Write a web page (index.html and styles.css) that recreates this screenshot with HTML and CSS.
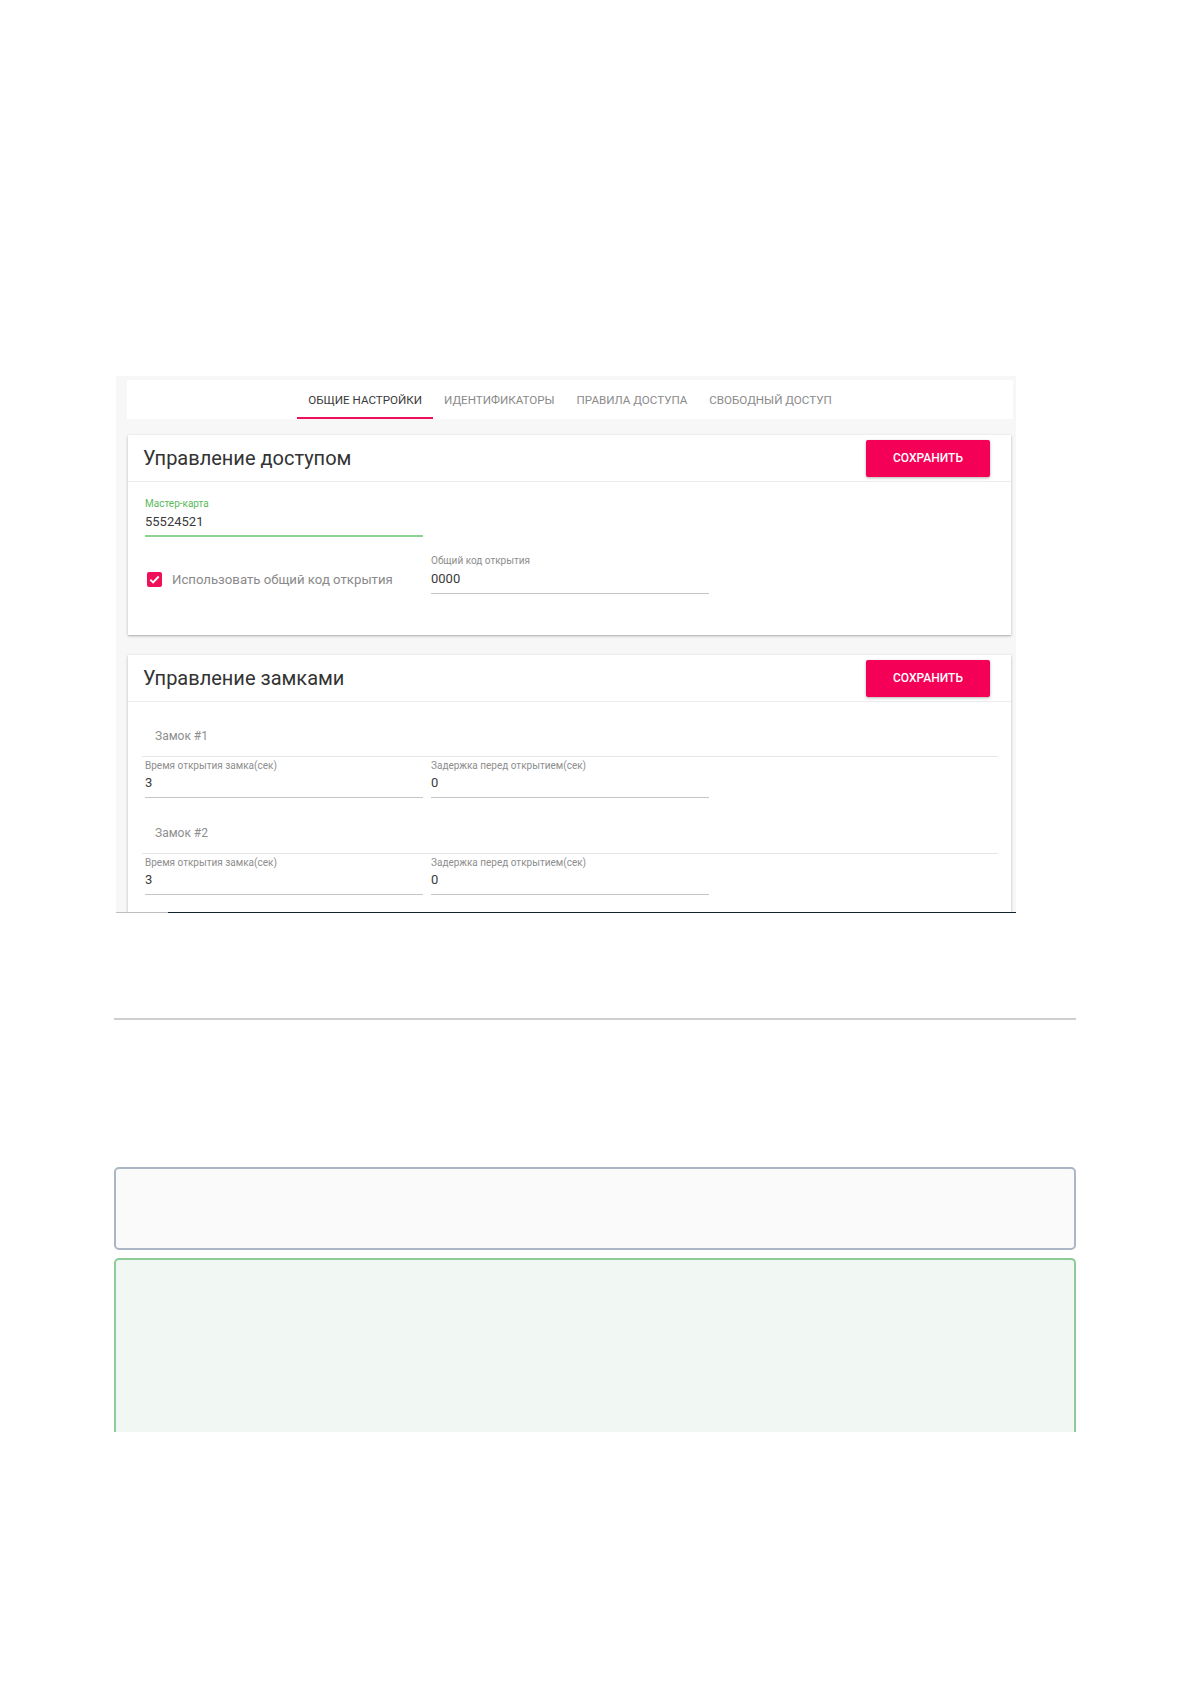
FILE: index.html
```html
<!DOCTYPE html>
<html lang="ru">
<head>
<meta charset="utf-8">
<title>Управление доступом</title>
<link rel="stylesheet" href="styles.css">
</head>
<body>
<div class="page">
  <div class="shot">
    <div class="shot-inner">
      <nav class="tabs">
        <span class="tab active">ОБЩИЕ НАСТРОЙКИ</span>
        <span class="tab">ИДЕНТИФИКАТОРЫ</span>
        <span class="tab">ПРАВИЛА ДОСТУПА</span>
        <span class="tab">СВОБОДНЫЙ ДОСТУП</span>
      </nav>

      <section class="card card-access">
        <header class="card-head">
          <h2 class="card-title">Управление доступом</h2>
          <button class="btn-save">СОХРАНИТЬ</button>
        </header>
        <div class="card-body">
          <div class="field field-focus">
            <div class="field-label">Мастер-карта</div>
            <div class="field-value">55524521</div>
          </div>
          <div class="row row-check">
            <label class="check">
              <span class="check-box"><svg viewBox="0 0 16 16" width="15" height="15"><path d="M3.5 8.2l3 3 6-6.4" fill="none" stroke="#fff" stroke-width="2"/></svg></span>
              <span class="check-text">Использовать общий код открытия</span>
            </label>
            <div class="field">
              <div class="field-label">Общий код открытия</div>
              <div class="field-value">0000</div>
            </div>
          </div>
        </div>
      </section>

      <section class="card card-locks">
        <header class="card-head">
          <h2 class="card-title">Управление замками</h2>
          <button class="btn-save">СОХРАНИТЬ</button>
        </header>
        <div class="card-body locks-body">
          <div class="lock">
            <div class="lock-title">Замок #1</div>
            <div class="row row-fields">
              <div class="field">
                <div class="field-label">Время открытия замка(сек)</div>
                <div class="field-value">3</div>
              </div>
              <div class="field">
                <div class="field-label">Задержка перед открытием(сек)</div>
                <div class="field-value">0</div>
              </div>
            </div>
          </div>
          <div class="lock">
            <div class="lock-title">Замок #2</div>
            <div class="row row-fields">
              <div class="field">
                <div class="field-label">Время открытия замка(сек)</div>
                <div class="field-value">3</div>
              </div>
              <div class="field">
                <div class="field-label">Задержка перед открытием(сек)</div>
                <div class="field-value">0</div>
              </div>
            </div>
          </div>
        </div>
      </section>
    </div>
    <div class="shot-edge"><span class="edge-light"></span><span class="edge-dark"></span></div>
  </div>

  <div class="rule"></div>

  <div class="note note-gray"></div>
  <div class="note note-green"></div>
</div>
</body>
</html>
```

FILE: styles.css
```css
* { box-sizing: border-box; }
html, body { margin: 0; padding: 0; background: #ffffff; }
body { font-family: Roboto, "Noto Sans", "Liberation Sans", sans-serif; color: #333; }

.page { padding-top: 376px; height: 1684px; overflow: hidden; }

.shot {
  margin-left: 116px;
  width: 900px;
  height: 537px;
  background: #f7f7f7;
  display: flex;
  flex-direction: column;
}
.shot-inner {
  height: 536px;
  overflow: hidden;
  padding: 4px 3px 0 11px;
}
.shot-edge { display: flex; height: 1px; }
.edge-light { width: 52px; background: #bdbdbd; }
.edge-dark { flex: 1; background: #13232d; }

/* tabs */
.tabs {
  height: 39px;
  background: #fff;
  display: flex;
  justify-content: center;
  align-items: stretch;
}
.tab {
  display: flex;
  align-items: center;
  padding: 2px 11px 0;
  font-size: 11.6px;
  color: #8a8a8a;
  border-bottom: 2px solid transparent;
}
.tab.active { color: #3a3a3a; border-bottom-color: #f0105a; }

/* cards */
.card {
  background: #fff;
  margin: 16px 2px 0 1px;
  box-shadow: 0 1px 3px rgba(0,0,0,0.22), 0 1px 1px rgba(0,0,0,0.10);
}
.card-locks { margin-top: 20px; }
.card-head {
  height: 47px;
  display: flex;
  align-items: center;
  justify-content: space-between;
  padding: 0 21px 0 15px;
  border-bottom: 1px solid #ececec;
}
.card-title {
  margin: 0;
  font-size: 20px;
  font-weight: 400;
  color: #333;
}
.btn-save {
  width: 124px;
  height: 37px;
  border: 0;
  border-radius: 2px;
  background: #f50057;
  color: #fff;
  font-family: Roboto, "Liberation Sans", sans-serif;
  font-size: 12px;
  font-weight: 500;
  box-shadow: 0 1px 3px rgba(0,0,0,0.3);
  padding: 0;
}

.card-body { padding: 16px 17px 41px; }

.field { width: 278px; border-bottom: 1px solid #c4c4c4; padding-bottom: 5px; }
.field-label { font-size: 10px; color: #8e8e8e; line-height: 12px; }
.field-value { font-size: 13px; color: #3a3a3a; line-height: 18px; margin-top: 3px; }
.field-focus { border-bottom: 2px solid #8fd18f; padding-bottom: 4px; }
.field-focus .field-label { color: #5cb85c; }

.row { display: flex; }
.row-check { margin-top: 18px; align-items: flex-end; }
.check {
  width: 286px;
  display: flex;
  align-items: center;
  gap: 10px;
  padding-left: 2px;
  margin-bottom: 7px;
}
.check-box {
  width: 15px;
  height: 15px;
  border-radius: 2px;
  background: #f0105a;
  display: flex;
}
.check-text { font-size: 13.2px; color: #8a8a8a; }
.row-check .field { width: 278px; }

.locks-body { padding: 26px 13px 40px 14px; }
.lock-title {
  font-size: 12px;
  color: #8e8e8e;
  padding: 0 0 12px 13px;
  line-height: 16px;
  border-bottom: 1px solid #e6e6e6;
}
.row-fields { gap: 8px; padding: 3px 0 0 3px; }
.row-fields .field-value { margin-top: 2px; }
.lock + .lock { margin-top: 27px; }

.rule {
  margin: 105px 0 0 114px;
  width: 962px;
  height: 2px;
  background: #cfcfcf;
}

.note {
  margin-left: 114px;
  width: 962px;
  border: 2px solid #aab5c5;
  border-radius: 5px;
  background: #fafafa;
}
.note-gray { margin-top: 147px; height: 83px; }
.note-green {
  margin-top: 8px;
  height: 174px;
  border-color: #8ecb98;
  background: #f1f8f4;
  border-bottom: 0;
  border-radius: 5px 5px 0 0;
}
```
